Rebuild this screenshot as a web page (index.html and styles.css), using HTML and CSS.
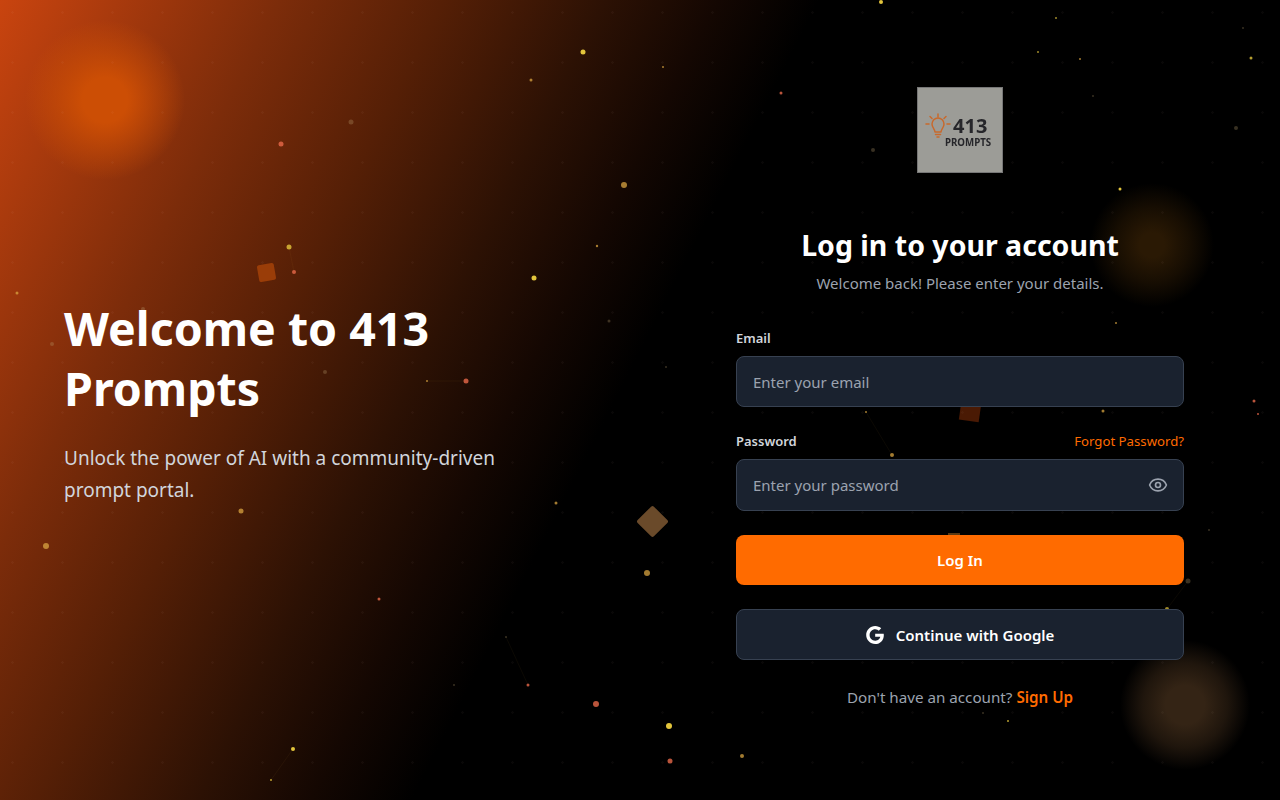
FILE: index.html
```html
<!DOCTYPE html>
<html lang="en">
<head>
<meta charset="utf-8">
<title>Log in - 413 Prompts</title>
<link rel="stylesheet" href="styles.css">
</head>
<body>
<div class="page">
  <div class="backdrop">
    <div class="glow glow-a"></div>
    <div class="glow glow-b"></div>
    <div class="glow glow-c"></div>
    <div class="shape shape-a"></div>
    <div class="shape shape-b"></div>
    <div class="shape shape-c"></div>
    <div class="shape shape-d"></div>
    <svg class="particles" width="1280" height="800" viewBox="0 0 1280 800">
      <g stroke="#d9a441" stroke-width=".6" opacity=".09">
        <path d="M293 749L271 780M506 637L528 685M427 381L466 381M289 247L294 272M892 455L866 412M1188 581L1167 609"/>
      </g>
      <g fill="#e3c53c">
        <circle cx="881" cy="2" r="2"/><circle cx="583" cy="52" r="2.5"/><circle cx="289" cy="247" r="2.5" opacity=".8"/><circle cx="534" cy="278" r="2.5"/><circle cx="1120" cy="189" r="1.5"/><circle cx="669" cy="726" r="3"/><circle cx="293" cy="749" r="2"/><circle cx="1167" cy="609" r="2" opacity=".7"/><circle cx="1056" cy="18" r="1" opacity=".7"/><circle cx="1038" cy="52" r="1" opacity=".7"/><circle cx="1251" cy="58" r="1.5" opacity=".8"/><circle cx="1008" cy="721" r="1" opacity=".8"/><circle cx="271" cy="780" r="1" opacity=".8"/>
      </g>
      <g fill="#d9a441" opacity=".75">
        <circle cx="624" cy="185" r="3"/><circle cx="531" cy="80" r="1.5"/><circle cx="597" cy="246" r="1.2"/><circle cx="17" cy="293" r="1.5"/><circle cx="241" cy="511" r="2.5"/><circle cx="46" cy="546" r="3"/><circle cx="647" cy="573" r="3"/><circle cx="556" cy="503" r="1.5"/><circle cx="427" cy="381" r="1"/><circle cx="892" cy="455" r="2"/><circle cx="1103" cy="411" r="1.5"/><circle cx="742" cy="756" r="2"/><circle cx="1116" cy="323" r="1"/><circle cx="866" cy="412" r="1"/><circle cx="1080" cy="59" r="1"/><circle cx="663" cy="67" r="1"/>
      </g>
      <g fill="#e8694a" opacity=".8">
        <circle cx="281" cy="144" r="2.5"/><circle cx="294" cy="272" r="2"/><circle cx="781" cy="93" r="1.5"/><circle cx="466" cy="381" r="2.5"/><circle cx="379" cy="599" r="1.5"/><circle cx="528" cy="685" r="1.5"/><circle cx="596" cy="704" r="3"/><circle cx="670" cy="761" r="2.5"/><circle cx="1254" cy="401" r="1.5"/><circle cx="1258" cy="414" r="1"/>
      </g>
      <g fill="#b9a070" opacity=".3">
        <circle cx="351" cy="122" r="2.5"/><circle cx="52" cy="344" r="2"/><circle cx="609" cy="321" r="1.5"/><circle cx="325" cy="372" r="2"/><circle cx="143" cy="309" r="2"/><circle cx="666" cy="367" r="1"/><circle cx="506" cy="637" r="1"/><circle cx="454" cy="685" r="1"/><circle cx="873" cy="150" r="2"/><circle cx="1236" cy="128" r="2"/><circle cx="1188" cy="581" r="2.5"/><circle cx="1243" cy="28" r="1"/><circle cx="1093" cy="96" r="1"/><circle cx="1209" cy="530" r="1"/><circle cx="983" cy="713" r="1"/>
      </g>
    </svg>
  </div>

  <section class="intro">
    <h1 class="intro-title">Welcome to 413 Prompts</h1>
    <p class="intro-text">Unlock the power of AI with a community-driven prompt portal.</p>
  </section>

  <main class="panel">
    <div class="form-wrap">
      <div class="logo">
        <div class="logo-top">
          <svg class="logo-bulb" width="26" height="26" viewBox="0 0 26 26" fill="none" stroke="#c8692c" stroke-width="1.5" stroke-linecap="round" stroke-linejoin="round">
            <path d="M13 1v3M5 3.500l2 2M21 3.500l-2 2M1 11h3M22 11h3"/>
            <path d="M10 19c0-3-3-4-3-8a6 6 0 0 1 12 0c0 4-3 5-3 8z"/>
            <path d="M10.500 21.500h5M12 24h2"/>
          </svg>
          <span class="logo-num">413</span>
        </div>
        <span class="logo-word">PROMPTS</span>
      </div>
      <h2 class="title">Log in to your account</h2>
      <p class="subtitle">Welcome back! Please enter your details.</p>

      <form class="form">
        <div class="field">
          <label class="label" for="email">Email</label>
          <input class="input" id="email" type="email" placeholder="Enter your email">
        </div>
        <div class="field">
          <div class="label-row">
            <label class="label" for="password">Password</label>
            <a class="forgot" href="#">Forgot Password?</a>
          </div>
          <div class="input-wrap">
            <input class="input input-tall" id="password" type="password" placeholder="Enter your password">
            <svg class="eye" width="20" height="20" viewBox="0 0 24 24" fill="none" stroke="#9ca3af" stroke-width="2" stroke-linecap="round" stroke-linejoin="round">
              <path d="M2.060 12.350a1 1 0 0 1 0-.700 10.750 10.750 0 0 1 19.880 0 1 1 0 0 1 0 .700 10.750 10.750 0 0 1-19.880 0"/>
              <circle cx="12" cy="12" r="3"/>
            </svg>
          </div>
        </div>
        <button class="btn btn-primary" type="button">Log In</button>
        <button class="btn btn-google" type="button">
          <svg width="18" height="18" viewBox="0 0 24 24" fill="#fff"><path d="M12.240 10.285V14.400h6.806c-.275 1.765-2.056 5.174-6.806 5.174-4.095 0-7.439-3.389-7.439-7.574s3.345-7.574 7.439-7.574c2.330 0 3.891.989 4.785 1.849l3.254-3.138C18.189 1.186 15.479 0 12.240 0c-6.635 0-12 5.365-12 12s5.365 12 12 12c6.926 0 11.520-4.869 11.520-11.726 0-.788-.085-1.389-.189-1.989H12.240z"/></svg>
          <span>Continue with Google</span>
        </button>
      </form>
      <p class="signup">Don't have an account? <a class="signup-link" href="#">Sign Up</a></p>
    </div>
  </main>
</div>
</body>
</html>
```
FILE: styles.css
```css
* { box-sizing: border-box; }
html, body { margin: 0; height: 100%; }
body {
  background: #000;
  color: #fff;
  font-family: "Noto Sans", "Open Sans", sans-serif;
  overflow: hidden;
}
.page {
  position: relative;
  display: flex;
  width: 1280px;
  height: 800px;
  overflow: hidden;
  background: linear-gradient(117deg, #c9440f 0, #7c2c0a 250px, #551f06 395px, #2c1104 540px, #140702 640px, #000 730px);
}
.backdrop { position: absolute; inset: 0; }
.backdrop::after {
  content: "";
  position: absolute;
  inset: 0;
  background-image: radial-gradient(circle at 12.500px 12.500px, rgba(255,225,200,.035) 1px, transparent 1.500px);
  background-size: 50px 50px;
}
.particles { position: absolute; inset: 0; }
.glow { position: absolute; border-radius: 50%; }
.glow-a { left: 25px; top: 20px; width: 160px; height: 160px; background: radial-gradient(circle closest-side, #cc4e05 0, #cc4e05 28%, rgba(204,78,5,.55) 60%, rgba(204,78,5,0) 100%); }
.glow-b { left: 1090px; top: 183px; width: 124px; height: 124px; background: radial-gradient(circle closest-side, #2a1904 0, #2a1904 20%, rgba(42,25,4,.55) 60%, rgba(42,25,4,0) 100%); }
.glow-c { left: 1120px; top: 640px; width: 130px; height: 130px; background: radial-gradient(circle closest-side, #342415 0, #342415 30%, rgba(52,36,21,.6) 65%, rgba(52,36,21,0) 100%); }
.shape { position: absolute; }
.shape-a { left: 258px; top: 264px; width: 17px; height: 17px; border-radius: 2px; background: #9a3d08; transform: rotate(-10deg); }
.shape-b { left: 960px; top: 403px; width: 20px; height: 18px; background: #4a1a04; transform: rotate(8deg); }
.shape-c { left: 640.500px; top: 509.500px; width: 23px; height: 23px; border-radius: 2px; background: #6a4a2a; transform: rotate(45deg); }
.shape-d { left: 948px; top: 533px; width: 12px; height: 6px; background: #5a3a14; }

.intro {
  position: relative;
  flex: 0 0 640px;
  display: flex;
  flex-direction: column;
  justify-content: center;
  padding: 3px 64px 0;
}
.intro-title { margin: 0 0 24px; font-size: 46.500px; line-height: 60px; font-weight: 700; max-width: 420px; }
.intro-text { margin: 0; font-size: 19px; line-height: 32px; color: #d1d5db; max-width: 448px; }

.panel {
  position: relative;
  flex: 0 0 640px;
  display: flex;
  justify-content: center;
}
.form-wrap { width: 448px; padding-top: 87px; }
.logo {
  display: flex;
  flex-direction: column;
  justify-content: center;
  width: 86px;
  height: 86px;
  margin: 0 auto 53px;
  padding-left: 7px;
  background: #9c9c97;
  border: 1px solid #777;
  color: #26262a;
  font-weight: 700;
  filter: blur(.4px);
}
.logo-top { display: flex; align-items: center; gap: 2px; height: 26px; }
.logo-num { font-size: 20px; line-height: 14px; }
.logo-word { margin: -1px 0 0 20px; font-size: 9.700px; line-height: 9px; }
.title { margin: 0; font-size: 28.500px; line-height: 38px; font-weight: 700; text-align: center; }
.subtitle { margin: 7px 0 0; font-size: 15px; line-height: 24px; color: #9ca3af; text-align: center; }
.form { display: flex; flex-direction: column; margin-top: 33px; }
.field { margin-bottom: 24px; }
.label { display: block; font-size: 13px; line-height: 20px; font-weight: 600; color: #d1d5db; }
.label-row { display: flex; justify-content: space-between; align-items: center; }
.forgot { font-size: 13.200px; line-height: 20px; color: #ff6b00; text-decoration: none; }
.input {
  display: block;
  width: 100%;
  height: 51px;
  margin-top: 8px;
  padding: 0 16px;
  border: 1px solid #374151;
  border-radius: 8px;
  background: #1a222f;
  color: #fff;
  font: inherit;
  font-size: 15px;
  outline: none;
}
.input-tall { height: 52px; }
.input::placeholder { color: #9ca3af; opacity: 1; }
.input-wrap { position: relative; }
.eye { position: absolute; right: 16px; top: 16px; }
.btn {
  display: flex;
  align-items: center;
  justify-content: center;
  gap: 12px;
  width: 100%;
  font: inherit;
  font-size: 15px;
  font-weight: 600;
  color: #fff;
  border-radius: 8px;
}
.btn-primary { height: 50px; border: 0; background: #ff6b00; margin-bottom: 24px; }
.btn-google { height: 51px; border: 1px solid #374151; background: #1a222f; }
.signup { margin: 25px 0 0; font-size: 15.200px; line-height: 24px; color: #9ca3af; text-align: center; }
.signup-link { color: #ff6b00; font-weight: 600; text-decoration: none; }
```
